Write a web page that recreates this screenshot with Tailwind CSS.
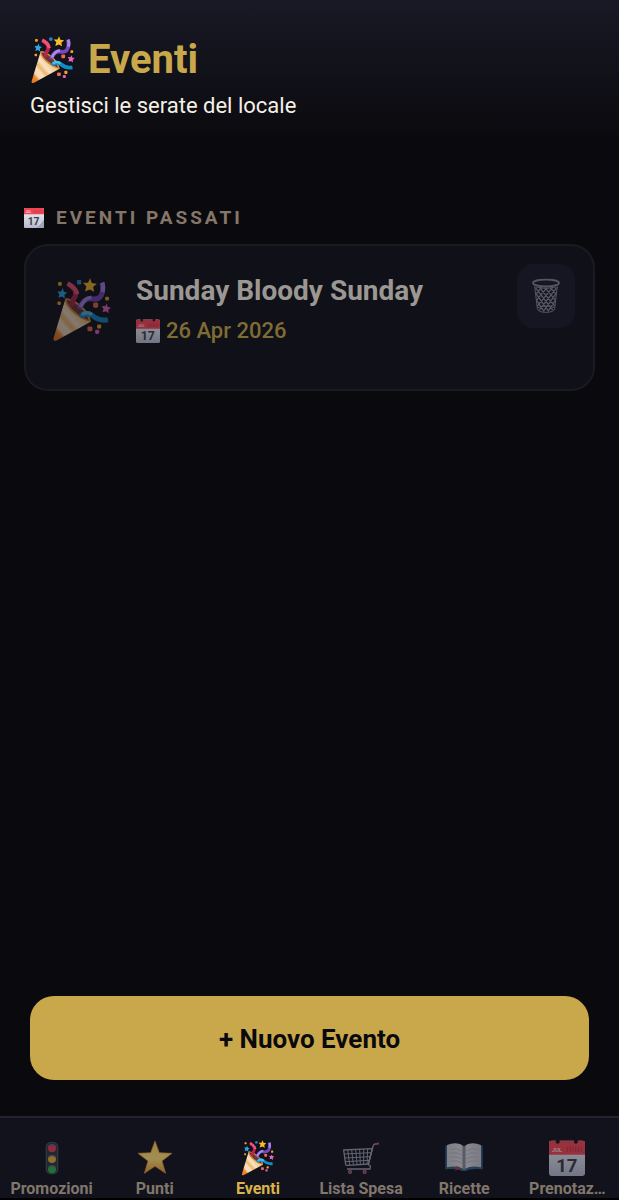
<!DOCTYPE html>
<html lang="it">
<head>
  <meta charset="UTF-8" />
  <meta name="viewport" content="width=device-width, initial-scale=1" />
  <title>Eventi - Gestione locale</title>
  <script src="https://cdn.jsdelivr.net/npm/@tailwindcss/browser@4"></script>
</head>
<body class="bg-[#0a0a0e] min-h-screen flex flex-col font-['Roboto',sans-serif] text-[#f5f0e6]">

  <!-- Icone condivise -->
  <svg class="absolute size-0" aria-hidden="true">
    <defs>
      <linearGradient id="cono" x1="0" y1="1" x2="1" y2="0">
        <stop offset="0" stop-color="#e8701c" />
        <stop offset=".16" stop-color="#f08a30" />
        <stop offset=".22" stop-color="#f7d8b0" />
        <stop offset=".32" stop-color="#f5e0c4" />
        <stop offset=".4" stop-color="#f0b468" />
        <stop offset=".5" stop-color="#f7e4c8" />
        <stop offset=".62" stop-color="#f3cb8c" />
        <stop offset=".8" stop-color="#f0a850" />
      </linearGradient>
      <linearGradient id="foglio" x1="0" y1="0" x2="0" y2="1">
        <stop offset="0" stop-color="#f4f5fa" />
        <stop offset="1" stop-color="#b4b8cc" />
      </linearGradient>
      <linearGradient id="oro" x1="0" y1="0" x2="0" y2="1">
        <stop offset="0" stop-color="#ffd04a" />
        <stop offset=".55" stop-color="#ffe27a" />
        <stop offset="1" stop-color="#f09a2c" />
      </linearGradient>
      <linearGradient id="pagina" x1="0" y1="0" x2="1" y2="0">
        <stop offset="0" stop-color="#e9eaf2" />
        <stop offset=".42" stop-color="#ffffff" />
        <stop offset=".5" stop-color="#8f93a8" />
        <stop offset=".58" stop-color="#ffffff" />
        <stop offset="1" stop-color="#e0e2ec" />
      </linearGradient>
    </defs>

    <symbol id="festa" viewBox="38 42 178 190">
      <path d="M78 103 L42 222 Q41 230 50 228 L153 172 Q148 140 117 118 Q94 101 78 103Z" fill="url(#cono)" />
      <path d="M78 103 Q72 116 95 140 Q124 168 153 172 Q154 153 124 126 Q98 103 78 103Z" fill="#c98540" />
      <path d="M82 107 Q82 118 100 136 Q123 158 146 167 Q142 146 119 127 Q96 107 82 107Z" fill="#6d3430" />
      <path d="M86 60 Q114 76 107 96 Q98 107 96 125" fill="none" stroke="#b8234e" stroke-width="15" />
      <path d="M84 58 Q111 72 112 90" fill="none" stroke="#f0527a" stroke-width="13" />
      <path d="M119 134 Q132 99 155 104 Q195 111 187 56" fill="none" stroke="#7548bd" stroke-width="15" />
      <path d="M122 128 Q137 98 155 100" fill="none" stroke="#a987e8" stroke-width="11" />
      <path d="M188 84 Q193 69 187 56" fill="none" stroke="#a987e8" stroke-width="12" />
      <path d="M123 158 Q139 140 157 153 Q178 171 204 166" fill="none" stroke="#138bc6" stroke-width="15" />
      <path d="M126 151 Q142 139 157 151" fill="none" stroke="#43c3ed" stroke-width="10" />
      <path d="M151 43 L156 57 L171 59 L160 69 L163 83 L150 76 L136 82 L140 67 L130 56 L145 56Z" fill="#fbbd24" />
      <path d="M70 72 L73 83 L83 86 L75 92 L76 103 L67 97 L57 101 L60 91 L54 82 L65 82Z" fill="#2fa8e6" />
      <path d="M200 118 L203 127 L213 130 L205 136 L206 147 L198 141 L188 144 L191 134 L185 125 L196 126Z" fill="#ef65c0" />
      <rect x="112" y="48" width="13" height="13" rx="3" fill="#248bd0" />
      <rect x="56" y="54" width="11" height="11" rx="3" fill="#f5a322" />
      <rect x="54" y="112" width="10" height="10" rx="3" fill="#f5a322" />
      <rect x="196" y="98" width="11" height="11" rx="3" fill="#f5a322" />
      <rect x="160" y="115" width="15" height="15" rx="4" fill="#f26b50" />
      <rect x="143" y="186" width="15" height="14" rx="4" fill="#f26b50" />
      <rect x="172" y="180" width="12" height="12" rx="3" fill="#f5a322" />
      <rect x="166" y="196" width="12" height="12" rx="4" fill="#e85ec4" />
    </symbol>

    <symbol id="calendario" viewBox="0 0 105 105">
      <rect y="2" width="105" height="103" rx="7" fill="url(#foglio)" />
      <path d="M0 43V8Q0 2 7 2H98Q105 2 105 8V43Z" fill="#ee4654" />
      <path d="M20 0H31V7Q25 15 20 7ZM73 0H84V7Q78 15 73 7Z" fill="#1b1420" />
      <path d="M54 20V35M62 18V35M70 20V35M78 18V35M86 20V35M94 20V35" stroke="#c93545" stroke-width="3" />
    </symbol>

    <symbol id="calendario-strappo" viewBox="0 0 105 105">
      <path d="M0 4Q0 0 4 0H101Q105 0 105 4V66L66 105H4Q0 105 0 101Z" fill="url(#foglio)" />
      <path d="M0 33V4Q0 0 4 0H101Q105 0 105 4V33Z" fill="#ee4654" />
      <path d="M56 14V26M65 12V26M74 14V26M83 12V26M92 14V26" stroke="#c93545" stroke-width="3" />
      <path d="M105 63Q92 76 76 76Q80 92 66 105H101Q105 105 105 101Z" fill="#9fa3b8" />
      <path d="M105 63Q92 76 76 76Q80 92 66 105Z" fill="#d6d9e6" />
    </symbol>
  </svg>

  <header class="bg-linear-to-b from-[#191926] to-[#0a0a0e] px-[30px] pt-9 pb-5">
    <h1 class="flex items-center gap-3 text-[40px] leading-12 font-bold text-[#c9a84c]">
      <svg class="w-[46px] h-12"><use href="#festa" /></svg>
      Eventi
    </h1>
    <p class="mt-2 text-[22px] leading-7">Gestisci le serate del locale</p>
  </header>

  <main class="grow px-6 pt-16">
    <h2 class="flex items-center gap-3 text-[19px] leading-7 font-bold tracking-[3px] text-[#857768]">
      <svg class="size-5 tracking-normal" viewBox="0 0 105 105">
        <use href="#calendario-strappo" />
        <text x="8" y="26" font-size="17" font-weight="700" fill="#ffd3d6">JUL</text>
        <text x="50" y="90" font-size="54" font-weight="700" text-anchor="middle" fill="#3c3d48">17</text>
      </svg>
      EVENTI PASSATI
    </h2>

    <article class="mt-3 flex items-start min-h-[147px] rounded-3xl border-2 border-[#1a1a22] bg-[#101018] pl-[26px] pr-[18px] pt-[18px]">
      <svg class="w-[60px] h-16 mt-3.5 opacity-50"><use href="#festa" /></svg>
      <div class="ml-6 mt-2 grow">
        <h3 class="text-[28px] leading-[38px] font-bold text-[#9b9792]">Sunday Bloody Sunday</h3>
        <p class="mt-[5px] flex items-center gap-1.5 text-[22px] leading-8 font-medium text-[#7f6c34]">
          <svg class="size-6 opacity-60" viewBox="0 0 105 105">
            <use href="#calendario" />
            <text x="8" y="34" font-size="17" font-weight="700" fill="#ffd3d6">JUL</text>
            <text x="52" y="93" font-size="54" font-weight="700" text-anchor="middle" fill="#3c3d48">17</text>
          </svg>
          26 Apr 2026
        </p>
      </div>
      <button type="button" aria-label="Elimina evento" class="flex items-center justify-center w-[58px] h-16 rounded-2xl bg-[#161623]">
        <svg class="w-7 h-9" viewBox="0 0 84 104" fill="none" stroke="#565662" stroke-width="3">
          <path d="M8 22 L16 90 Q18 101 42 101 Q66 101 68 90 L76 22" />
          <ellipse cx="42" cy="13" rx="39" ry="10" stroke-width="5" />
          <path d="M12 25Q42 34 72 25M16 87Q42 77 68 87" />
          <path stroke-width="4" d="M10 27L62 94M22 26L68 82M38 26L71 65M54 26L73 47M12 45L50 98M14 65L36 98M74 27L22 94M62 26L16 82M46 26L13 65M30 26L11 47M72 45L34 98M70 65L48 98" />
        </svg>
      </button>
    </article>
  </main>

  <div class="px-[30px] pb-9">
    <button type="button" class="w-full h-[84px] rounded-3xl bg-[#c9a84c] pt-0.5 text-[26px] font-bold text-[#0a0a0e]">+ Nuovo Evento</button>
  </div>

  <nav class="grid grid-cols-6 h-[84px] border-t-2 border-b-2 border-t-[#24242e] border-b-black bg-[#12121c] pt-[22px] text-base leading-5 font-bold text-[#81766b] text-center">
    <a href="#promozioni" class="flex flex-col items-center gap-[3px] min-w-0">
      <svg class="w-9 h-9 opacity-60" viewBox="0 0 108 108">
        <rect x="35" y="6" width="38" height="97" rx="15" fill="#43515c" />
        <rect x="39" y="9" width="30" height="91" rx="12" fill="#2c3640" />
        <circle cx="54" cy="25" r="12" fill="#e23a52" />
        <circle cx="54" cy="57" r="12" fill="#e8a73c" />
        <circle cx="54" cy="88" r="12" fill="#2fae4c" />
        <path d="M42 20Q54 8 66 20M42 52Q54 40 66 52M42 83Q54 71 66 83" fill="none" stroke="#59656f" stroke-width="4" />
      </svg>
      <span>Promozioni</span>
    </a>
    <a href="#punti" class="flex flex-col items-center gap-[3px] min-w-0">
      <svg class="w-9 h-9 opacity-60" viewBox="0 0 108 108">
        <path d="M54 3L67 38L105 40L75 63L86 100L54 79L22 100L33 63L3 40L41 38Z" fill="url(#oro)" stroke="#e8963a" stroke-width="2" stroke-linejoin="round" />
      </svg>
      <span>Punti</span>
    </a>
    <a href="#eventi" aria-current="page" class="flex flex-col items-center gap-[3px] min-w-0 text-[#d9b44a]">
      <svg class="w-9 h-9"><use href="#festa" /></svg>
      <span>Eventi</span>
    </a>
    <a href="#lista-spesa" class="flex flex-col items-center gap-[3px] min-w-0">
      <svg class="w-9 h-9 opacity-60" viewBox="0 0 108 108" fill="none" stroke="#9a9cae" stroke-width="4" stroke-linejoin="round">
        <path d="M2 30L8 73Q9 77 14 76L76 72L88 26Z" />
        <path stroke-width="3" d="M14 29L20 75M26 29L31 74M38 28L42 74M50 28L52 74M62 27L62 73M74 27L72 72M4 42L84 38M6 54L81 50M8 65L78 61" />
        <path d="M108 10L96 12Q92 13 90 19L76 74Q85 76 81 87H12" />
        <path d="M109 10L97 12" stroke="#c34c64" stroke-width="6" />
        <circle cx="21" cy="96" r="4" stroke="#a25a72" stroke-width="5" />
        <circle cx="65" cy="96" r="4" stroke="#a25a72" stroke-width="5" />
      </svg>
      <span class="whitespace-nowrap">Lista Spesa</span>
    </a>
    <a href="#ricette" class="flex flex-col items-center gap-[3px] min-w-0">
      <svg class="w-[38px] h-9 opacity-50" viewBox="0 0 114 108">
        <path d="M1 17H113V88Q76 85 64 93H50Q38 85 1 88Z" fill="#367197" />
        <path d="M6 15Q37 3 57 20Q77 3 108 15V82Q77 74 57 89Q37 74 6 82Z" fill="url(#pagina)" />
        <path d="M57 20V89" stroke="#8c91a6" stroke-width="2" />
        <path d="M16 28Q35 23 49 32M16 40Q35 35 49 44M16 52Q35 47 49 56M16 64Q35 59 49 68M98 28Q79 23 65 32M98 40Q79 35 65 44M98 52Q79 47 65 56M98 64Q79 59 65 68" fill="none" stroke="#d3d5df" stroke-width="3" />
        <path d="M33 79L45 81V91L38 88L31 93Z" fill="#dc3a61" />
      </svg>
      <span>Ricette</span>
    </a>
    <a href="#prenotazioni" class="flex flex-col items-center gap-[3px] min-w-0">
      <svg class="w-9 h-9 opacity-60" viewBox="0 0 105 105">
        <use href="#calendario" />
        <text x="8" y="34" font-size="17" font-weight="700" fill="#ffd3d6">JUL</text>
        <text x="52" y="93" font-size="54" font-weight="700" text-anchor="middle" fill="#3c3d48">17</text>
      </svg>
      <span>Prenotaz…</span>
    </a>
  </nav>

</body>
</html>
